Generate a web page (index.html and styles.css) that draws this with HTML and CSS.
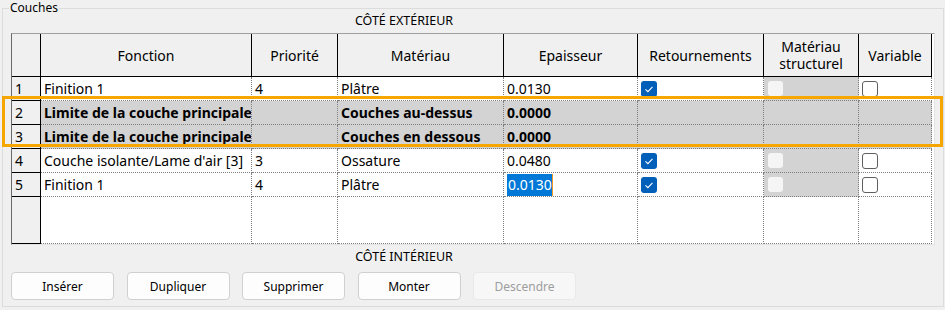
FILE: index.html
```html
<!DOCTYPE html>
<html lang="fr">
<head>
    <meta charset="utf-8">
    <title>Couches</title>
    <link rel="stylesheet" href="styles.css">
</head>
<body>
    <fieldset class="layers-box">
        <legend>Couches</legend>
        <div class="side-label">CÔTÉ EXTÉRIEUR</div>

        <div class="grid">
            <table class="layers">
                <colgroup>
                    <col class="c-num">
                    <col class="c-func">
                    <col class="c-prio">
                    <col class="c-mat">
                    <col class="c-thick">
                    <col class="c-wrap">
                    <col class="c-struct">
                    <col class="c-var">
                </colgroup>
                <thead>
                    <tr>
                        <th class="row-head"></th>
                        <th>Fonction</th>
                        <th>Priorité</th>
                        <th>Matériau</th>
                        <th>Epaisseur</th>
                        <th>Retournements</th>
                        <th><span class="two-line">Matériau<br>structurel</span></th>
                        <th>Variable</th>
                    </tr>
                </thead>
                <tbody>
                    <tr>
                        <td class="row-head">1</td>
                        <td>Finition 1</td>
                        <td>4</td>
                        <td>Plâtre</td>
                        <td>0.0130</td>
                        <td><span class="check on"></span></td>
                        <td class="locked"><span class="check dim"></span></td>
                        <td><span class="check"></span></td>
                    </tr>
                    <tr class="core">
                        <td class="row-head">2</td>
                        <td>Limite de la couche principale</td>
                        <td></td>
                        <td>Couches au-dessus</td>
                        <td>0.0000</td>
                        <td></td>
                        <td></td>
                        <td></td>
                    </tr>
                    <tr class="core">
                        <td class="row-head">3</td>
                        <td>Limite de la couche principale</td>
                        <td></td>
                        <td>Couches en dessous</td>
                        <td>0.0000</td>
                        <td></td>
                        <td></td>
                        <td></td>
                    </tr>
                    <tr>
                        <td class="row-head">4</td>
                        <td>Couche isolante/Lame d'air [3]</td>
                        <td>3</td>
                        <td>Ossature</td>
                        <td>0.0480</td>
                        <td><span class="check on"></span></td>
                        <td class="locked"><span class="check dim"></span></td>
                        <td><span class="check"></span></td>
                    </tr>
                    <tr>
                        <td class="row-head">5</td>
                        <td>Finition 1</td>
                        <td>4</td>
                        <td>Plâtre</td>
                        <td><span class="selected">0.0130</span></td>
                        <td><span class="check on"></span></td>
                        <td class="locked"><span class="check dim"></span></td>
                        <td><span class="check"></span></td>
                    </tr>
                    <tr class="new-row">
                        <td class="row-head"></td>
                        <td></td>
                        <td></td>
                        <td></td>
                        <td></td>
                        <td></td>
                        <td></td>
                        <td></td>
                    </tr>
                </tbody>
            </table>
            <!-- core boundary highlight -->
            <div class="core-frame"></div>
        </div>

        <div class="side-label inner">CÔTÉ INTÉRIEUR</div>

        <div class="actions">
            <button type="button">Insérer</button>
            <button type="button">Dupliquer</button>
            <button type="button">Supprimer</button>
            <button type="button">Monter</button>
            <button type="button" disabled>Descendre</button>
        </div>
    </fieldset>
</body>
</html>
```

FILE: styles.css
```css
body {
    margin: 0;
    background-color: #f0f0f0;
    font-family: "Noto Sans", sans-serif;
    color: #000;
}
.layers-box {
    margin: 0 5px 0 2px;
    padding: 0 8px 6px;
    border: 1px solid #dcdcdc;
}
.layers-box legend {
    font-size: 12px;
    line-height: 16px;
    padding: 0 1px;
    margin-left: -2px;
}
.side-label {
    width: 786px;
    height: 17px;
    font-size: 12.5px;
    line-height: 10px;
    text-align: center;
}
.side-label.inner {
    height: 24px;
    line-height: 24px;
}
.grid {
    position: relative;
    width: 922px;
    height: 210px;
    border-top: 1px solid #a0a0a0;
    border-left: 1px solid #696969;
    border-right: 1px solid #e3e3e3;
    border-bottom: 1px solid #e3e3e3;
    background: #fff;
}
.layers {
    table-layout: fixed;
    width: 920px;
    border-spacing: 0;
    font-size: 14px;
}
.c-num { width: 29px; }
.c-func { width: 211px; }
.c-prio { width: 86px; }
.c-mat { width: 166px; }
.c-thick { width: 134px; }
.c-wrap { width: 126px; }
.c-struct { width: 95px; }
.c-var { width: 73px; }
.layers th {
    height: 42px;
    padding: 0;
    font-weight: normal;
    line-height: 17px;
    background: #f0f0f0;
    border-right: 1px solid #000;
    border-bottom: 1px solid #000;
}
.two-line {
    display: block;
    line-height: 17.5px;
}
.layers tbody tr {
    height: 24px;
}
.layers td {
    padding: 0 0 0 3px;
    white-space: nowrap;
    overflow: hidden;
    vertical-align: middle;
    border-right: 1px dotted #808080;
    border-bottom: 1px dotted #808080;
}
.layers td.row-head {
    background: #f0f0f0;
    border-right: 1px solid #000;
    border-bottom: 1px solid #000;
}
.layers tr.new-row {
    height: 47px;
}
.layers tr.core td {
    background: #d3d3d3;
    font-weight: bold;
}
.layers tr.core td.row-head {
    background: #f0f0f0;
    font-weight: normal;
}
.layers td.locked {
    background: #d3d3d3;
    padding-left: 4px;
}
.check {
    display: block;
    width: 14px;
    height: 14px;
    border: 1px solid #5f5f5f;
    border-radius: 3px;
    background: #fff;
}
.check.on {
    width: 16px;
    height: 16px;
    border: none;
    background: #005fb8 url("data:image/svg+xml,%3Csvg xmlns='http://www.w3.org/2000/svg' width='16' height='16'%3E%3Cpath d='M4.5 8.3 L6.9 10.6 L11.5 5.8' fill='none' stroke='white' stroke-width='1.1'/%3E%3C/svg%3E") no-repeat;
}
.check.dim {
    width: 15px;
    height: 15px;
    border: none;
    background: #f5f5f5;
}
.selected {
    display: inline-block;
    line-height: 22px;
    padding: 0 0 0 1px;
    color: #fff;
    background: #0078d7;
    border-right: 1px solid #f39a1e;
}
.core-frame {
    position: absolute;
    left: -10px;
    top: 62px;
    width: 941px;
    height: 51px;
    box-sizing: border-box;
    border: 3px solid #f5a700;
}
.actions {
    display: grid;
    grid-template-columns: repeat(5, 103px);
    column-gap: 12.5px;
    margin-top: 3px;
}
.actions button {
    height: 28px;
    padding: 0;
    font-family: "Noto Sans", sans-serif;
    font-size: 12px;
    color: #000;
    background: #fdfdfd;
    border: 1px solid #d0d0d0;
    border-radius: 4px;
}
.actions button:disabled {
    color: #9d9d9d;
    background: #f7f7f7;
    border-color: #e9e9e9;
}
```
